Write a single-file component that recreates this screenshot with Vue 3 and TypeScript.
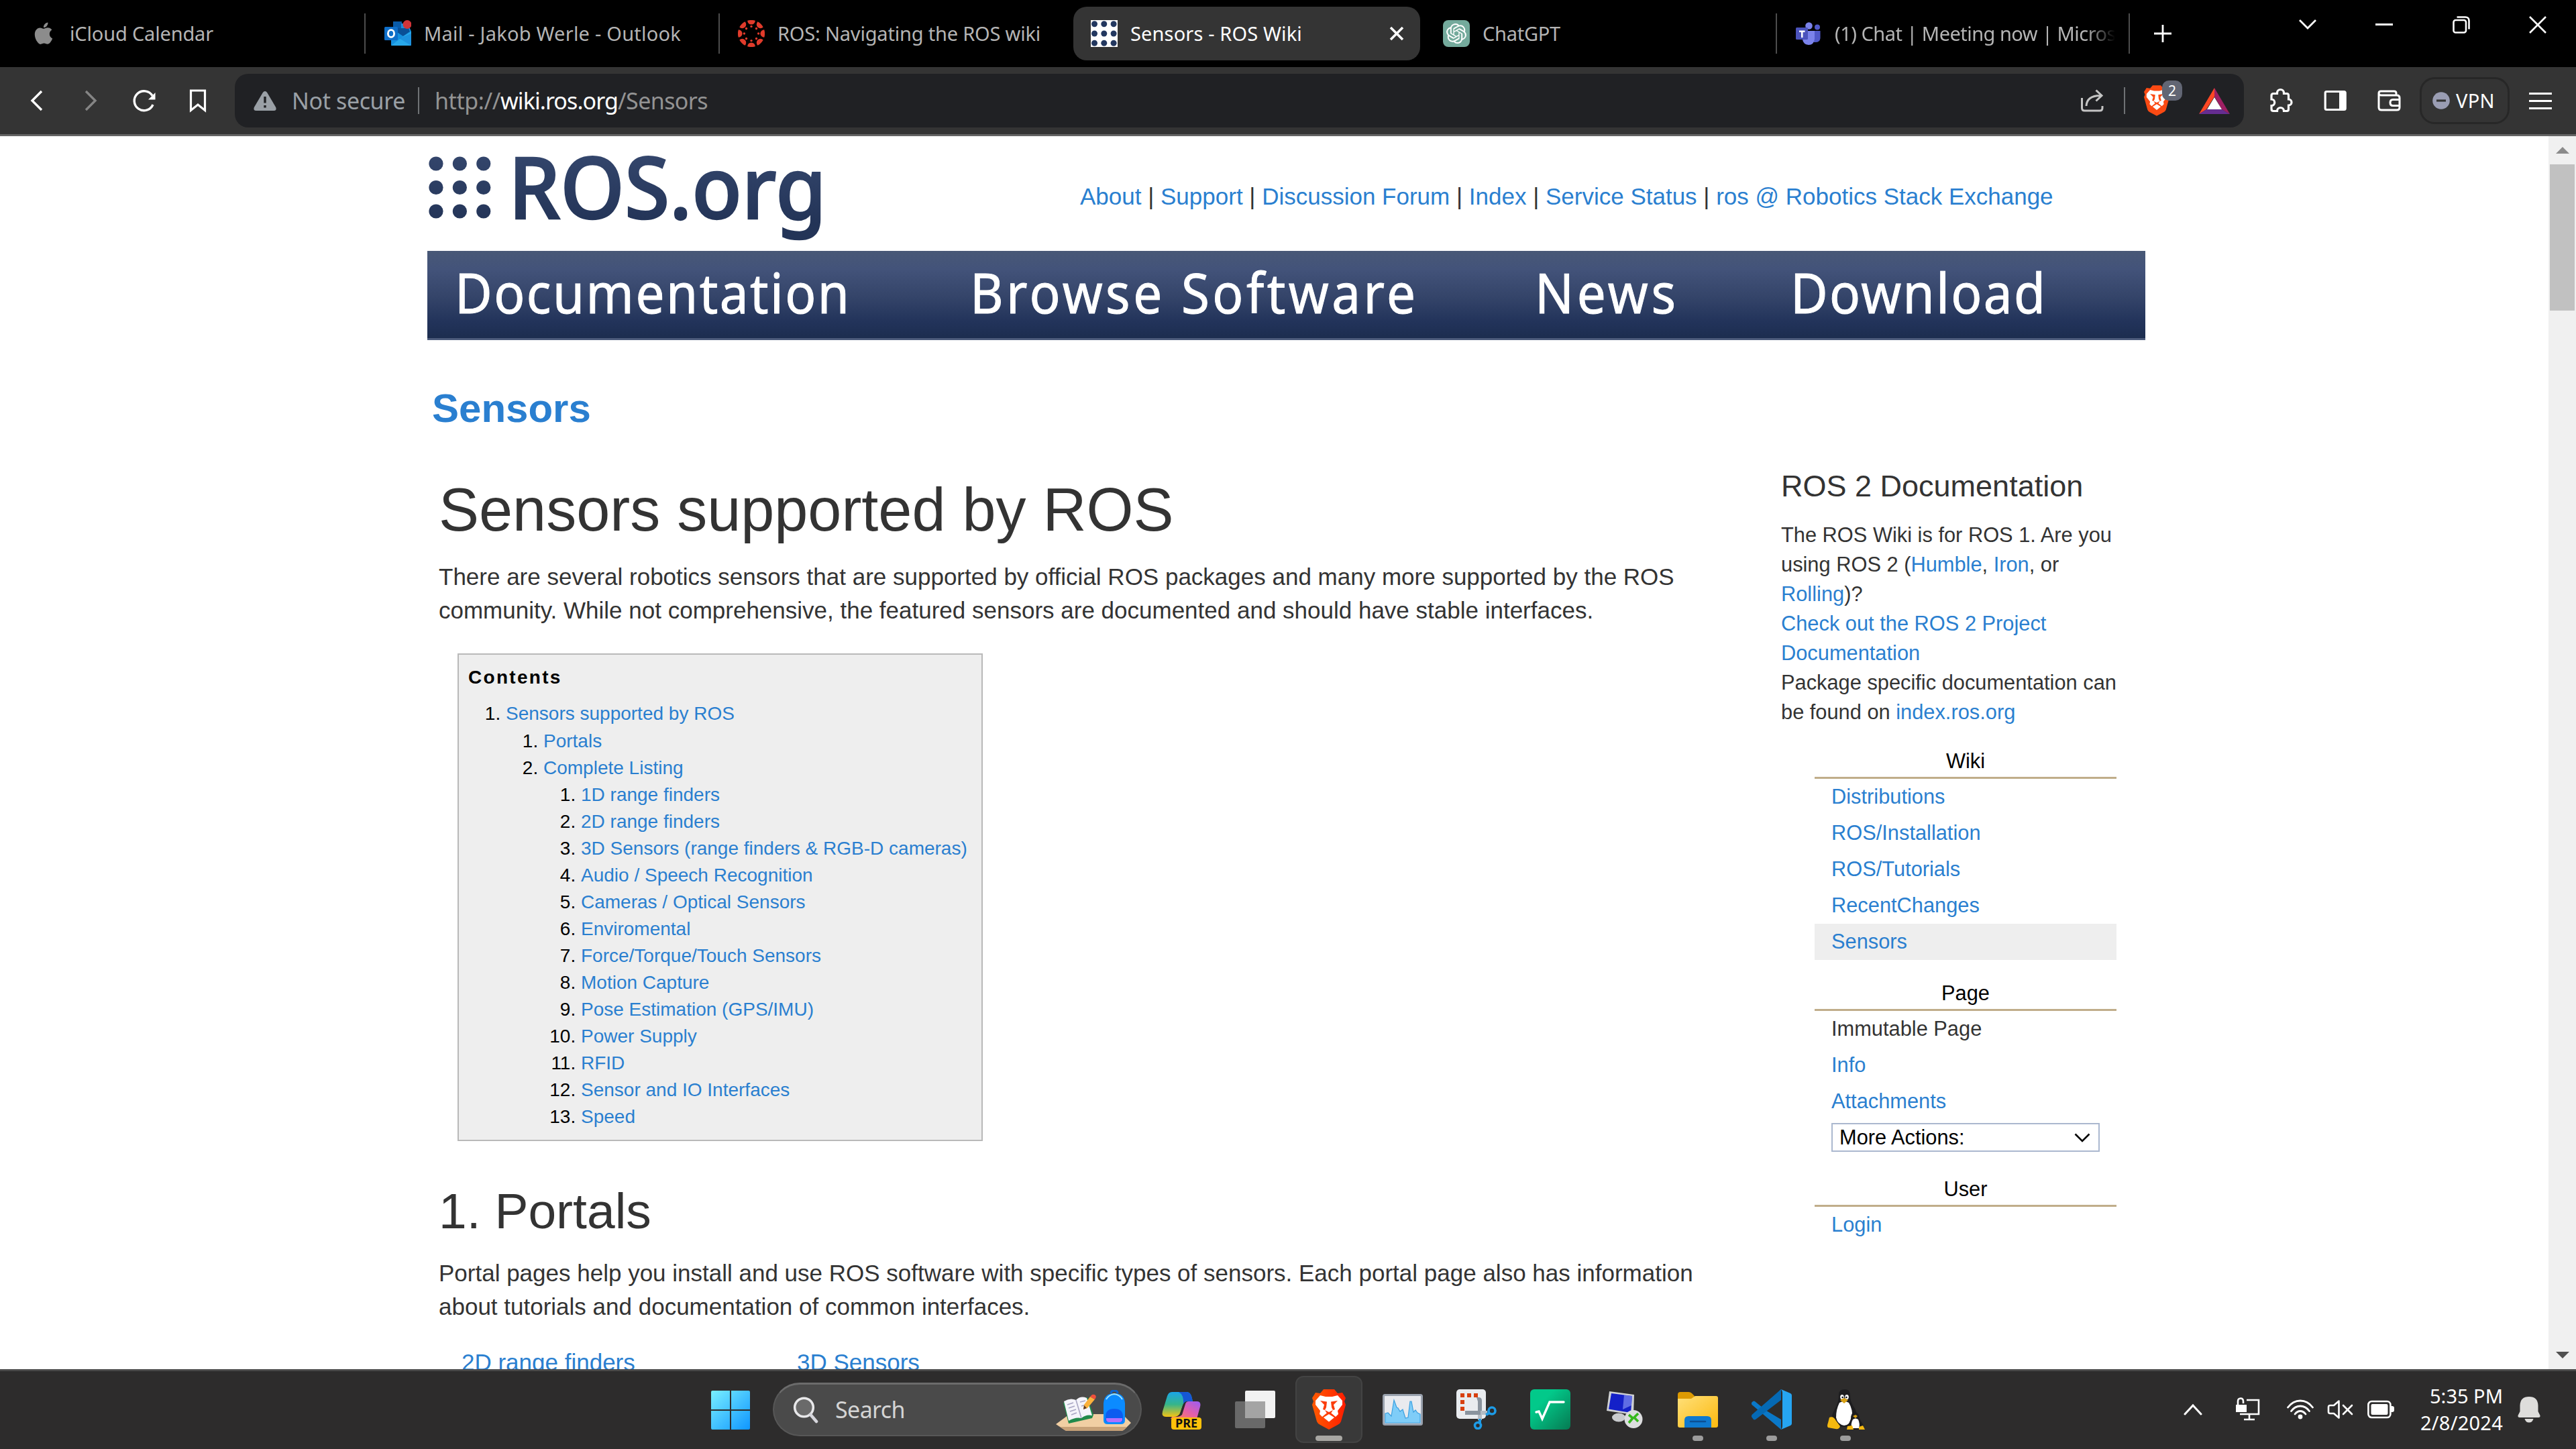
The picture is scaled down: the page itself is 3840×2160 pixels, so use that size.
<script setup lang="ts">
import type { Directive } from 'vue'

/* Tracks a UI label so that its advance width equals the given pixel width. */
const vFit: Directive<HTMLElement, number> = {
  mounted(el, { value }) {
    const count = (el.textContent ?? '').length
    const natural = el.getBoundingClientRect().width
    if (count > 0) el.style.letterSpacing = `${(value - natural) / count}px`
  },
}

interface Tab {
  title: string
  icon: string
  width: number
  pad: number
  text: number
  divider?: boolean
  active?: boolean
}

const tabs: Tab[] = [
  { title: 'iCloud Calendar', icon: 'apple', width: 545, pad: 45, text: 214, divider: true },
  { title: 'Mail - Jakob Werle - Outlook', icon: 'outlook', width: 528, pad: 28, text: 383, divider: true },
  { title: 'ROS: Navigating the ROS wiki', icon: 'canvas', width: 527, pad: 27, text: 392 },
  { title: 'Sensors - ROS Wiki', icon: 'ros', width: 517, pad: 26, text: 256, active: true },
  { title: 'ChatGPT', icon: 'gpt', width: 532, pad: 34, text: 116, divider: true },
  { title: '(1) Chat | Meeting now | Micros', icon: 'teams', width: 526, pad: 27, text: 419, divider: true },
]

const links = ['About', 'Support', 'Discussion Forum', 'Index', 'Service Status', 'ros @ Robotics Stack Exchange']

/* The glyphs are condensed to 92%, so x and w are given in page pixels and divided by the factor. */
const condense = 0.92
const banner = [
  { label: 'Documentation', x: 41, w: 588 },
  { label: 'Browse Software', x: 809, w: 664 },
  { label: 'News', x: 1651, w: 210 },
  { label: 'Download', x: 2032, w: 380 },
]

const listing = [
  '1D range finders',
  '2D range finders',
  '3D Sensors (range finders & RGB-D cameras)',
  'Audio / Speech Recognition',
  'Cameras / Optical Sensors',
  'Enviromental',
  'Force/Torque/Touch Sensors',
  'Motion Capture',
  'Pose Estimation (GPS/IMU)',
  'Power Supply',
  'RFID',
  'Sensor and IO Interfaces',
  'Speed',
]

const wikiLinks = ['Distributions', 'ROS/Installation', 'ROS/Tutorials', 'RecentChanges', 'Sensors']
const grid = [0, 1, 2]
const octants = [0, 45, 90, 135, 180, 225, 270, 315]
</script>

<template>
  <div class="screen">
    <div class="tabstrip">
      <div
        v-for="tab in tabs"
        :key="tab.title"
        class="tab"
        :class="{ active: tab.active, divider: tab.divider }"
        :style="{ width: tab.width + 'px', paddingLeft: tab.pad + 'px' }"
      >
        <svg class="favicon" viewBox="0 0 40 40">
          <path
            v-if="tab.icon === 'apple'"
            transform="translate(3.800 3.500) scale(1.35)"
            fill="#8c8c8c"
            d="M12.152 6.896c-.948 0-2.415-1.078-3.96-1.04-2.04.027-3.91 1.183-4.961 3.014-2.117 3.675-.546 9.103 1.519 12.09 1.013 1.454 2.208 3.09 3.792 3.039 1.52-.065 2.09-.987 3.935-.987 1.831 0 2.35.987 3.96.948 1.637-.026 2.676-1.48 3.676-2.948 1.156-1.688 1.636-3.325 1.662-3.415-.039-.013-3.182-1.221-3.22-4.857-.026-3.04 2.48-4.494 2.597-4.559-1.429-2.09-3.623-2.324-4.39-2.376-2-.156-3.675 1.09-4.61 1.09zM15.53 3.83c.843-1.012 1.4-2.427 1.245-3.83-1.207.052-2.662.805-3.532 1.818-.78.896-1.454 2.338-1.273 3.714 1.338.104 2.715-.688 3.559-1.701"
          />
          <g v-else-if="tab.icon === 'outlook'">
            <rect x="13" y="2" width="13" height="12" fill="#0a5ba8" />
            <rect x="25" y="5" width="12" height="10" fill="#1a8fdc" />
            <path d="M10 12H38L40 17V37a1 1 0 0 1-1 1H11a1 1 0 0 1-1-1Z" fill="#1490df" />
            <path d="M20 12H36L38 17L28 24L19 18Z" fill="#0a4f96" />
            <path d="M10 38L28 24L40 17V36Q40 38 38 38Z" fill="#28a8ea" />
            <path d="M22 27L40 38V20Z" fill="#1784d6" opacity=".6" />
            <rect x="0" y="10" width="20" height="20" rx="1.500" fill="#0f6fc9" />
            <ellipse cx="10" cy="20" rx="4.600" ry="5.400" fill="none" stroke="#fff" stroke-width="2.800" />
            <circle cx="34" cy="6.500" r="6.500" fill="#d13438" />
          </g>
          <g v-else-if="tab.icon === 'canvas'" transform="translate(20 20)" fill="#e13b2b">
            <g v-for="a in octants" :key="a" :transform="`rotate(${a})`">
              <path d="M-5.800 -19.200Q0 -21 5.800 -19.200A5.800 5.800 0 0 1 -5.800 -19.200Z" />
              <circle cx="0" cy="-10.600" r="1.700" />
            </g>
          </g>
          <g v-else-if="tab.icon === 'ros'">
            <rect width="40" height="40" fill="#fff" />
            <template v-for="r in grid" :key="r">
              <circle v-for="c in grid" :key="c" :cx="5.500 + c * 14.300" :cy="5.800 + r * 14.200" r="4.500" fill="#22375f" />
            </template>
          </g>
          <g v-else-if="tab.icon === 'gpt'">
            <rect width="40" height="40" rx="8" fill="#74aa9c" />
            <path
              transform="translate(5 5) scale(1.25)"
              fill="#fff"
              d="M22.2819 9.8211a5.9847 5.9847 0 0 0-.5157-4.9108 6.0462 6.0462 0 0 0-6.5098-2.9A6.0651 6.0651 0 0 0 4.9807 4.1818a5.9847 5.9847 0 0 0-3.9977 2.9 6.0462 6.0462 0 0 0 .7427 7.0966 5.98 5.98 0 0 0 .511 4.9107 6.051 6.051 0 0 0 6.5146 2.9001A5.9847 5.9847 0 0 0 13.2599 24a6.0557 6.0557 0 0 0 5.7718-4.2058 5.9894 5.9894 0 0 0 3.9977-2.9001 6.0557 6.0557 0 0 0-.7475-7.0729zm-9.022 12.6081a4.4755 4.4755 0 0 1-2.8764-1.0408l.1419-.0804 4.7783-2.7582a.7948.7948 0 0 0 .3927-.6813v-6.7369l2.02 1.1686a.071.071 0 0 1 .038.052v5.5826a4.504 4.504 0 0 1-4.4945 4.4944zm-9.6607-4.1254a4.4708 4.4708 0 0 1-.5346-3.0137l.142.0852 4.783 2.7582a.7712.7712 0 0 0 .7806 0l5.8428-3.3685v2.3324a.0804.0804 0 0 1-.0332.0615L9.74 19.9502a4.4992 4.4992 0 0 1-6.1408-1.6464zM2.3408 7.8956a4.485 4.485 0 0 1 2.3655-1.9728V11.6a.7664.7664 0 0 0 .3879.6765l5.8144 3.3543-2.0201 1.1685a.0757.0757 0 0 1-.071 0l-4.8303-2.7865A4.504 4.504 0 0 1 2.3408 7.872zm16.5963 3.8558L13.1038 8.364 15.1192 7.2a.0757.0757 0 0 1 .071 0l4.8303 2.7913a4.4944 4.4944 0 0 1-.6765 8.1042v-5.6772a.79.79 0 0 0-.407-.667zm2.0107-3.0231l-.142-.0852-4.7735-2.7818a.7759.7759 0 0 0-.7854 0L9.409 9.2297V6.8974a.0662.0662 0 0 1 .0284-.0615l4.8303-2.7866a4.4992 4.4992 0 0 1 6.6802 4.66zM8.3065 12.863l-2.02-1.1638a.0804.0804 0 0 1-.038-.0567V6.0742a4.4992 4.4992 0 0 1 7.3757-3.4537l-.142.0805L8.704 5.459a.7948.7948 0 0 0-.3927.6813zm1.0976-2.3654l2.602-1.4998 2.6069 1.4998v2.9994l-2.5974 1.4997-2.6067-1.4997Z"
            />
          </g>
          <g v-else>
            <circle cx="33" cy="10.500" r="4" fill="#5059c9" />
            <circle cx="20.500" cy="8.500" r="5.300" fill="#7b83eb" />
            <path d="M28 16H37.500V27Q37 33 30 33H28Z" fill="#5059c9" />
            <path d="M11 16H29V28Q28 37 20 37Q12 36 11 29Z" fill="#7b83eb" />
            <rect x="1" y="11" width="18" height="18" rx="1.500" fill="#4b53bc" />
            <path d="M6 15.500H14.500V18H11.500V26H9V18H6Z" fill="#fff" />
          </g>
        </svg>
        <span class="tab-clip"><span v-fit="tab.text" class="tab-title">{{ tab.title }}</span></span>
        <svg v-if="tab.active" class="tab-close" viewBox="0 0 22 22">
          <path d="M2 2L20 20M20 2L2 20" stroke="#fff" stroke-width="3.600" />
        </svg>
      </div>
      <svg class="new-tab" viewBox="0 0 28 28"><path d="M14 1V27M1 14H27" stroke="#fff" stroke-width="2.800" /></svg>
      <div class="window-controls">
        <svg viewBox="0 0 28 28"><path d="M2 7L14 19L26 7" fill="none" stroke="#fff" stroke-width="2.800" /></svg>
        <svg viewBox="0 0 28 28"><path d="M1 13.500H27" stroke="#fff" stroke-width="3" /></svg>
        <svg viewBox="0 0 28 28">
          <rect x="2.500" y="7" width="18.500" height="18.500" rx="3" fill="none" stroke="#fff" stroke-width="2.600" />
          <path d="M7.500 2.500H20Q25.500 2.500 25.500 8V20.500" fill="none" stroke="#fff" stroke-width="2.600" />
        </svg>
        <svg viewBox="0 0 28 28"><path d="M2 2L26 26M26 2L2 26" stroke="#fff" stroke-width="2.600" /></svg>
      </div>
    </div>

    <div class="toolbar">
      <svg class="tool back" viewBox="0 0 40 40"><path d="M27 6L13 20L27 34" fill="none" stroke="#fff" stroke-width="3.400" /></svg>
      <svg class="tool forward" viewBox="0 0 40 40"><path d="M13 6L27 20L13 34" fill="none" stroke="#858585" stroke-width="3.400" /></svg>
      <svg class="tool reload" viewBox="0 0 40 40">
        <path d="M33 26A14.500 14.500 0 1 1 32 12.500" fill="none" stroke="#fff" stroke-width="3.400" />
        <path d="M36.500 8V18.500H26Z" fill="#fff" />
      </svg>
      <svg class="tool bookmark" viewBox="0 0 40 40">
        <path d="M9.500 5H30.500V34.500L20 26L9.500 34.500Z" fill="none" stroke="#fff" stroke-width="3.200" />
      </svg>
      <div class="address">
        <svg class="warn" viewBox="0 0 36 32">
          <path d="M18 2Q20 2 21.200 4L34.200 26Q36 31 31 31H5Q0 31 1.800 26L14.800 4Q16 2 18 2Z" fill="#9aa0a6" />
          <path d="M18 10V19.500M18 23V26.500" stroke="#202124" stroke-width="3.400" />
        </svg>
        <span v-fit="169" class="address-note">Not secure</span>
        <i class="bar" />
        <span class="url"><span v-fit="98" class="dim">http://</span><span v-fit="175">wiki.ros.org</span><span v-fit="134" class="dim">/Sensors</span></span>
        <svg class="share" viewBox="0 0 36 36">
          <path d="M2.500 14V29Q2.500 33 6.500 33H29Q33 33 33 29V26" fill="none" stroke="#c4c4c4" stroke-width="3" />
          <path d="M9 26Q10 10 31 10.500M23.500 2.500L32 10.500L23.500 18.500" fill="none" stroke="#c4c4c4" stroke-width="3" />
        </svg>
        <i class="bar bar-right" />
        <div class="shield">
          <svg viewBox="0 0 50 60">
            <path d="M12 6L17 0H33L38 6L45 5L50 13L48 18L50 23L43 48Q42 51 38 53L25 60L12 53Q8 51 7 48L0 23L2 18L0 13L5 5Z" fill="#fb4a13" />
            <path d="M5 17L12 9L20 11H30L38 9L45 17L45 23L38 32L39 37L35 41L29 36L25 34L21 36L15 41L11 37L12 32L5 23Z" fill="#fff" />
            <path d="M25 37L33 42L25 48.500L17 42Z" fill="#fff" />
            <path d="M12 17L22 18.500L21 27L19 31L16 30L18 23ZM38 17L28 18.500L29 27L31 31L34 30L32 23ZM19 31L25 34L31 31L28 36H22Z" fill="#fb4a13" />
          </svg>
          <b>2</b>
        </div>
        <svg class="bat" viewBox="0 0 46 39">
          <path d="M23 0L0 39L11 32L23 13Z" fill="#ff4724" />
          <path d="M23 0L46 39L34 32L23 13Z" fill="#9e1f63" />
          <path d="M0 39H46L34 32H11Z" fill="#662d91" />
          <path d="M23 14L34 32H12Z" fill="#fff" />
        </svg>
      </div>
      <svg class="tool ext" viewBox="0 0 40 40">
        <path
          d="M6 12.500Q6 9.500 9 9.500H14.500V8.500A5 5 0 0 1 24.500 8.500V9.500H29Q31.500 9.500 31.500 12.500V18A4.500 4.500 0 0 1 31.500 27V32.500Q31.500 35.500 29 35.500H24.500A5 5 0 0 0 14.500 35.500H9Q6 35.500 6 32.500V27.500A4.500 4.500 0 0 0 6 18Z"
          fill="none"
          stroke="#fff"
          stroke-width="3.200"
        />
      </svg>
      <svg class="tool panel" viewBox="0 0 40 40">
        <rect x="5.200" y="6.500" width="30" height="27" rx="2" fill="none" stroke="#fff" stroke-width="3.200" />
        <rect x="26" y="6" width="10" height="28" fill="#fff" />
      </svg>
      <svg class="tool wallet" viewBox="0 0 40 40">
        <path d="M5 9Q5 6 8 6H28Q31 6 31 9V12M5 9V30Q5 34 9 34H32Q36 34 36 30V16Q36 12 32 12H9Q5 12 5 9" fill="none" stroke="#fff" stroke-width="3" />
        <path d="M36 18.500H26Q22 18.500 22 23Q22 27.500 26 27.500H36" fill="none" stroke="#fff" stroke-width="3" />
      </svg>
      <div class="vpn">
        <svg viewBox="0 0 26 26"><circle cx="13" cy="13" r="12.800" fill="#9a9db3" /><path d="M6 13H20" stroke="#343434" stroke-width="3.200" /></svg>
        <span v-fit="58">VPN</span>
      </div>
      <svg class="tool menu" viewBox="0 0 40 40"><path d="M3 9.500H37M3 20.500H37M3 31.500H37" stroke="#fff" stroke-width="3.200" /></svg>
    </div>

    <div class="viewport">
      <div class="page">
        <div class="header">
          <svg class="logo" viewBox="0 0 600 170">
            <defs>
              <linearGradient id="navy" x1="0" y1="30" x2="0" y2="130" gradientUnits="userSpaceOnUse">
                <stop offset="0" stop-color="#33456b" />
                <stop offset="1" stop-color="#233457" />
              </linearGradient>
            </defs>
            <template v-for="r in grid" :key="r">
              <circle v-for="c in grid" :key="c" :cx="13 + c * 35.400" :cy="41 + r * 35.500" r="10.600" fill="url(#navy)" />
            </template>
            <text x="121" y="122.500" textLength="474" lengthAdjust="spacingAndGlyphs" class="logo-text" fill="url(#navy)" stroke="url(#navy)">ROS.org</text>
          </svg>
          <nav class="links">
            <template v-for="(link, i) in links" :key="link">
              <template v-if="i > 0">{{ ' | ' }}</template><a>{{ link }}</a>
            </template>
          </nav>
        </div>
        <svg class="banner" viewBox="0 0 2561 133">
          <g :transform="`scale(${condense} 1)`">
            <text v-for="b in banner" :key="b.label" :x="b.x / condense" y="93" :textLength="b.w / condense" class="banner-text">{{ b.label }}</text>
          </g>
        </svg>
        <h1 class="title"><a>Sensors</a></h1>
        <div class="columns">
          <main>
            <h1>Sensors supported by ROS</h1>
            <p>There are several robotics sensors that are supported by official ROS packages and many more supported by the ROS<br />community. While not comprehensive, the featured sensors are documented and should have stable interfaces.</p>
            <div class="toc">
              <p class="toc-head">Contents</p>
              <ol>
                <li>
                  <a>Sensors supported by ROS</a>
                  <ol class="second">
                    <li><a>Portals</a></li>
                    <li>
                      <a>Complete Listing</a>
                      <ol>
                        <li v-for="item in listing" :key="item"><a>{{ item }}</a></li>
                      </ol>
                    </li>
                  </ol>
                </li>
              </ol>
            </div>
            <h2>1. Portals</h2>
            <p>Portal pages help you install and use ROS software with specific types of sensors. Each portal page also has information<br />about tutorials and documentation of common interfaces.</p>
            <div class="portal-links"><a>2D range finders</a><a>3D Sensors</a></div>
          </main>
          <aside>
            <h3>ROS 2 Documentation</h3>
            <p>The ROS Wiki is for ROS 1. Are you<br />using ROS 2 (<a>Humble</a>, <a>Iron</a>, or<br /><a>Rolling</a>)?<br /><a>Check out the ROS 2 Project<br />Documentation</a><br />Package specific documentation can<br />be found on <a>index.ros.org</a></p>
            <section>
              <h4>Wiki</h4>
              <div v-for="w in wikiLinks" :key="w" class="row" :class="{ current: w === 'Sensors' }"><a>{{ w }}</a></div>
            </section>
            <section>
              <h4>Page</h4>
              <div class="row">Immutable Page</div>
              <div class="row"><a>Info</a></div>
              <div class="row"><a>Attachments</a></div>
              <div class="select">
                <span>More Actions:</span>
                <svg viewBox="0 0 24 14"><path d="M1.500 1.500L12 12L22.500 1.500" fill="none" stroke="#000" stroke-width="2.600" /></svg>
              </div>
            </section>
            <section>
              <h4>User</h4>
              <div class="row"><a>Login</a></div>
            </section>
          </aside>
        </div>
      </div>
      <div class="scrollbar">
        <svg viewBox="0 0 20 10"><path d="M0 10L10 0L20 10Z" fill="#8b8b8b" /></svg>
        <div class="thumb" />
        <svg class="down" viewBox="0 0 20 10"><path d="M0 0L10 10L20 0Z" fill="#505050" /></svg>
      </div>
    </div>

    <div class="taskbar">
      <svg class="start" viewBox="0 0 58 58">
        <defs>
          <linearGradient id="win" x1="0" y1="0" x2="1" y2="1" gradientUnits="objectBoundingBox">
            <stop offset="0" stop-color="#79efff" />
            <stop offset="1" stop-color="#0f96ff" />
          </linearGradient>
        </defs>
        <path d="M2 0H28V28H0V2Q0 0 2 0ZM30 0H56Q58 0 58 2V28H30ZM0 30H28V58H2Q0 58 0 56ZM30 30H58V56Q58 58 56 58H30Z" fill="url(#win)" />
      </svg>
      <div class="search">
        <svg class="glass" viewBox="0 0 38 40">
          <circle cx="16.500" cy="16" r="13.800" fill="#6a6a6a" stroke="#e8e8ea" stroke-width="3.600" />
          <path d="M26 26.500L35 37" stroke="#d6d6dc" stroke-width="4.600" stroke-linecap="round" />
        </svg>
        <span v-fit="104">Search</span>
        <svg class="art" viewBox="0 0 114 62">
          <path d="M26 36H96Q101 36 103 39L113 49L103 59Q101 61 98 61H18Q15 61 13 59L1 51L16 40Q20 36 26 36Z" fill="#f1cfa3" />
          <path d="M1 51L8 55H107L103 59Q101 61 98 61H18Q15 61 13 59Z" fill="#c7a177" />
          <path d="M12 19L48 11L57 37L55 42L20 50Z" fill="#218a4b" />
          <path d="M13 17Q22 11 31 15Q38 8 47 12L55 38Q46 36 39 42Q30 40 20 46Z" fill="#f5f4fb" />
          <path d="M31 15L39 42M18 22L27 19M20 27L29 24M22 32L31 29M24 37L32 34M37 18L45 16M39 24L46 22" stroke="#a9a6c4" stroke-width="1.600" />
          <path d="M43 22L52 10L59 14L48 27L42 29Z" fill="#fbb13c" />
          <path d="M42 29L43 23L47 27Z" fill="#5a3b2a" />
          <path d="M52 10L55 7Q58 6 60 8Q62 10 59 14Z" fill="#f0503c" />
          <path d="M83 5Q83 1 88 1Q93 1 93 5" fill="none" stroke="#0a62d0" stroke-width="3" />
          <path d="M72 20Q73 5 88 5Q103 5 104 20V45Q104 51 98 51H78Q72 51 72 45Z" fill="#0b8bff" />
          <path d="M76 14Q80 7 88 6Q96 7 100 14" fill="none" stroke="#9fe2ff" stroke-width="2" />
          <path d="M75 40Q75 28 88 28Q101 28 101 40V44Q101 48 97 48H79Q75 48 75 44Z" fill="#0d5cf0" />
          <path d="M76 42H100V45Q99 48 96 48H80Q77 48 76 45Z" fill="#b070ff" />
        </svg>
      </div>
      <div class="apps">
        <div class="app">
          <svg viewBox="0 0 60 60">
            <defs>
              <linearGradient id="copA" x1="0" y1="0" x2="0" y2="1">
                <stop offset="0" stop-color="#1aa5e8" /><stop offset=".5" stop-color="#35b58a" /><stop offset="1" stop-color="#f4c414" />
              </linearGradient>
              <linearGradient id="copB" x1="1" y1="0" x2="0" y2="1">
                <stop offset="0" stop-color="#9a5cf5" /><stop offset=".5" stop-color="#e45fa8" /><stop offset="1" stop-color="#ff8a4a" />
              </linearGradient>
            </defs>
            <path d="M16 4H38Q43 4 45 10L47 18H39Q34 18 32 24L28 36Q25 41 19 41H7Q0 41 2 33L9 10Q11 4 16 4Z" fill="url(#copA)" />
            <path d="M26 4H38Q43 4 45 10L47 18H39Q35 18 33 22Q34 8 26 4Z" fill="#1557d6" />
            <path d="M33 22L28 36Q27 39 24 41H30L36 24Q37 20 41 18H39Q35 18 33 22Z" fill="#2d2c2c" />
            <path d="M41 18H53Q60 18 58 26L53 44H14L16 41H22Q28 41 31 38L36 22Q37 18 41 18Z" fill="url(#copB)" />
            <rect x="15" y="42" width="45" height="18" rx="4" fill="#ffc20a" />
            <text x="37.500" y="57" text-anchor="middle" class="pre">PRE</text>
          </svg>
        </div>
        <div class="app">
          <svg viewBox="0 0 60 60">
            <rect x="0" y="18" width="45" height="40" rx="2" fill="#696969" />
            <rect x="15" y="2" width="45" height="41" rx="2" fill="#f2f2f2" />
            <path d="M15 18H45V43H17Q15 43 15 41Z" fill="#a4a4a4" />
          </svg>
        </div>
        <div class="app focus">
          <svg viewBox="-5 0 60 60">
            <defs>
              <linearGradient id="brv" x1="0" y1="0" x2="1" y2="0"><stop offset="0" stop-color="#ff5a00" /><stop offset="1" stop-color="#ff1d00" /></linearGradient>
            </defs>
            <path d="M12 6L17 0H33L38 6L45 5L50 13L48 18L50 23L43 48Q42 51 38 53L25 60L12 53Q8 51 7 48L0 23L2 18L0 13L5 5Z" fill="url(#brv)" />
            <path d="M5 17L12 9L20 11H30L38 9L45 17L45 23L38 32L39 37L35 41L29 36L25 34L21 36L15 41L11 37L12 32L5 23Z" fill="#fff" />
            <path d="M25 37L33 42L25 48.500L17 42Z" fill="#fff" />
            <path d="M12 17L22 18.500L21 27L19 31L16 30L18 23ZM38 17L28 18.500L29 27L31 31L34 30L32 23ZM19 31L25 34L31 31L28 36H22Z" fill="#fb3d0c" />
          </svg>
          <i class="mark wide" />
        </div>
        <div class="app">
          <svg viewBox="0 0 60 60">
            <rect x="1.500" y="8.500" width="57" height="44" rx="2" fill="#e9eaee" stroke="#9aa2ae" stroke-width="3" />
            <path d="M4 36L8 35L13 40L17 16L21 27L23 28L26 33L30 30L34 43L38 42L41 18L43 18L46 34L49 31L52 35L56 37V50H4Z" fill="#7fcdf8" stroke="#3aa0e0" stroke-width="1.200" />
          </svg>
        </div>
        <div class="app">
          <svg viewBox="0 0 60 60">
            <rect x="0" y="0" width="44" height="44" rx="5" fill="#e9ecef" />
            <path d="M6 6H12V12H6ZM16 6H22V12H16ZM26 6H32V12H26ZM6 16H12V22H6ZM6 26H12V32H6Z" fill="#d8400f" />
            <path d="M30 12H33Q38 12 38 17V44H32V38H13V32H32V18Z" fill="#8a949e" />
            <path d="M36 32H46V38H36ZM32 38H38V46H32Z" fill="#b4bcc4" />
            <circle cx="53" cy="32" r="5" fill="none" stroke="#1d9be6" stroke-width="3.600" />
            <circle cx="32" cy="54" r="4.500" fill="none" stroke="#1d9be6" stroke-width="3.600" />
            <path d="M44 38L50 35M35 44V50" stroke="#1d9be6" stroke-width="4" />
          </svg>
        </div>
        <div class="app">
          <svg viewBox="0 0 60 60">
            <defs><linearGradient id="grn" x1="0" y1="0" x2="1" y2="1"><stop offset=".3" stop-color="#02c98a" /><stop offset="1" stop-color="#067a52" /></linearGradient></defs>
            <rect width="60" height="60" rx="6" fill="url(#grn)" />
            <path d="M9 34L13 33L18 44L29 19H50" fill="none" stroke="#fff" stroke-width="3.400" stroke-linecap="round" />
          </svg>
        </div>
        <div class="app">
          <svg viewBox="0 0 60 60">
            <ellipse cx="22" cy="42" rx="10" ry="6.500" fill="#c9cbce" />
            <path d="M8 3L45 8L44 38L4 32Z" fill="#cfd1d4" />
            <path d="M11 6L42 10L40 35L7 29.500Z" fill="#1420c8" />
            <path d="M30 8.500L42 10L41 24L28 30Z" fill="#7f8df0" opacity=".7" />
            <circle cx="44" cy="44.500" r="13.500" fill="#dcdddf" />
            <path d="M37 38L43 43L37 50M51 36L45 42L51 48" fill="none" stroke="#36b81c" stroke-width="3.600" />
          </svg>
        </div>
        <div class="app">
          <svg viewBox="0 0 60 60">
            <defs>
              <linearGradient id="fld" x1="0" y1="0" x2="1" y2="1"><stop offset="0" stop-color="#ffe07a" /><stop offset="1" stop-color="#fcb90e" /></linearGradient>
            </defs>
            <path d="M0 8Q0 4 4 4H16Q19 4 21 6L25 10V20H0Z" fill="#dc9a02" />
            <path d="M0 14H20L26 10H57Q60 10 60 13V54Q60 57 57 57H3Q0 57 0 54Z" fill="url(#fld)" />
            <path d="M10 57V46Q10 40 16 40H44Q50 40 50 46V57Z" fill="#0f79cf" />
            <path d="M19 48H41" stroke="#0b4f94" stroke-width="2.600" stroke-linecap="round" />
          </svg>
          <i class="mark" />
        </div>
        <div class="app">
          <svg viewBox="0 0 60 60">
            <path d="M44 0L16 27L5 18Q3.500 17 2 18L0 20Q-.500 21.500 .500 23L44 60V45L19 30L44 15Z" fill="#0a78c8" />
            <path d="M0 41Q-.500 39 1 37.500L44 0V16L6 45Q4 46 2.500 44.500Z" fill="#0569b4" />
            <path d="M44 0L58 6Q60 7 60 9V51Q60 53 58 54L44 60Q46 58 46 55V5Q46 2 44 0Z" fill="#26a5f2" />
          </svg>
          <i class="mark" />
        </div>
        <div class="app">
          <svg viewBox="0 0 60 60">
            <path d="M20 8Q20 0 29 0Q37 0 37 9Q37 17 41 24Q48 33 47 44L43 56H14L9 44Q10 36 16 26Q20 18 20 8Z" fill="#1d1d1f" />
            <path d="M21 20Q28 16 35 20Q41 30 40 42Q36 54 28 54Q18 52 16 42Q16 30 21 20Z" fill="#fff" />
            <ellipse cx="25" cy="11.500" rx="2.800" ry="3.500" fill="#fff" /><ellipse cx="32" cy="11.500" rx="2.800" ry="3.500" fill="#fff" />
            <circle cx="25.600" cy="12" r="1.200" fill="#000" /><circle cx="31.400" cy="12" r="1.200" fill="#000" />
            <path d="M22 16L28 13L34 16L28 21Z" fill="#d9a114" />
            <path d="M6 42Q12 39 16 47L22 55Q21 60 15 59L4 57Q2 55 4 50Z" fill="#f5b90f" />
            <path d="M38 44Q38 34 44.500 34Q50 34 51 44L57 54L52 60H36L34 54Z" fill="#1d1d1f" />
            <path d="M41 45Q45 42 49 45Q52 52 50 58H40Q37 52 41 45Z" fill="#fff" />
            <path d="M41 40L45 38L48 40L45 43Z" fill="#d9a114" />
            <path d="M33 55L40 54L42 60H32ZM50 56L56 54L59 60H50Z" fill="#f5b90f" />
          </svg>
          <i class="mark" />
        </div>
      </div>
      <div class="tray">
        <svg class="up" viewBox="0 0 28 18"><path d="M2 16L14 3L26 16" fill="none" stroke="#fff" stroke-width="3" stroke-linecap="round" /></svg>
        <svg class="net" viewBox="0 0 40 38">
          <g fill="none" stroke="#fff" stroke-width="2.600">
            <path d="M19 6H37V27H9M23 27V34M15 35H31" />
            <path d="M6 14V8Q6 3.500 10 3.500Q14 3.500 14 8V11" />
          </g>
          <rect x="3" y="13" width="16" height="11" fill="#fff" />
        </svg>
        <svg class="wifi" viewBox="0 0 40 30">
          <g fill="none" stroke="#fff" stroke-width="2.800" stroke-linecap="round">
            <path d="M1.500 12Q9 2 20 2Q31 2 38.500 12" /><path d="M6.500 17.500Q12 10 20 10Q28 10 33.500 17.500" /><path d="M12 22Q15.500 17.500 20 17.500Q24.500 17.500 28 22" />
          </g>
          <circle cx="20" cy="26" r="3.400" fill="#fff" />
        </svg>
        <svg class="mute" viewBox="0 0 40 30">
          <path d="M17.500 2.500L10 9H4.500Q2 9 2 11.500V18.500Q2 21 4.500 21H10L17.500 27.500Z" fill="none" stroke="#fff" stroke-width="2.600" stroke-linejoin="round" />
          <path d="M24 9L37 22M37 9L24 22" stroke="#fff" stroke-width="2.600" stroke-linecap="round" />
        </svg>
        <svg class="battery" viewBox="0 0 40 28">
          <rect x="1.400" y="2" width="33" height="24" rx="5" fill="none" stroke="#fff" stroke-width="2.600" />
          <rect x="5.500" y="6" width="25" height="16" rx="2" fill="#fff" />
          <path d="M35 9H37Q40 9 40 12V15Q40 18 37 18H35Z" fill="#fff" />
        </svg>
        <div class="clock"><span v-fit="109">5:35 PM</span><span v-fit="123">2/8/2024</span></div>
        <svg class="bell" viewBox="0 0 34 40">
          <path d="M17 1Q30 1 30.500 14V23L33.500 29Q34 32 31 32H3Q0 32 .500 29L3.500 23V14Q4 1 17 1Z" fill="#dedddb" />
          <path d="M10.500 34H23.500Q22 39.500 17 39.500Q12 39.500 10.500 34Z" fill="#dedddb" />
        </svg>
      </div>
    </div>
  </div>
</template>

<style>
body {
  background: #fff;
  overflow: hidden;
}
</style>

<style scoped>
.screen {
  width: 3840px;
  height: 2160px;
  overflow: hidden;
  display: flex;
  flex-direction: column;
  font-family: "Liberation Sans", Arial, sans-serif;
}
svg {
  display: block;
  flex: none;
}
h1, h2, h3, h4, p, ol {
  margin: 0;
  font-weight: 400;
}
a {
  color: #2a7fd0;
}
.tabstrip, .toolbar, .taskbar {
  flex: none;
  display: flex;
  font-family: "Noto Sans", "Open Sans", sans-serif;
  white-space: nowrap;
}

/* Tab strip */
.tabstrip {
  height: 100px;
  background: #000;
  align-items: center;
}
.tab {
  position: relative;
  box-sizing: border-box;
  height: 80px;
  flex: none;
  display: flex;
  align-items: center;
  border-radius: 20px;
  color: #b4b4b4;
  font-size: 29px;
}
.tab.active {
  background: #343434;
  color: #fff;
}
.tab.divider::after {
  content: "";
  position: absolute;
  right: 0;
  top: 10px;
  width: 2px;
  height: 60px;
  background: #4c4c4c;
}
.favicon {
  width: 40px;
  height: 40px;
}
.tab-clip {
  margin: 0 0 2px 19px;
  width: 425px;
}
.tab:nth-child(6) .tab-clip {
  -webkit-mask-image: linear-gradient(90deg, #000 375px, transparent 418px);
  mask-image: linear-gradient(90deg, #000 375px, transparent 418px);
}
.tab.active .tab-clip {
  width: 386px;
}
.tab-title {
  display: inline-block;
}
.tab-close {
  width: 22px;
  height: 22px;
}
.new-tab {
  width: 28px;
  height: 28px;
  margin-left: 35px;
}
.window-controls {
  display: flex;
  gap: 86.500px;
  margin: 0 43px 27px auto;
}
.window-controls svg {
  width: 28px;
  height: 28px;
}

/* Toolbar */
.toolbar {
  height: 100px;
  background: #343434;
  border-bottom: 3px solid #646464;
  align-items: center;
}
.tool {
  width: 40px;
  height: 40px;
}
.back { margin-left: 35px; }
.forward { margin-left: 40px; }
.reload { margin-left: 40px; }
.bookmark { margin-left: 40px; }
.address {
  box-sizing: border-box;
  width: 2995px;
  height: 80px;
  margin-left: 35px;
  padding-left: 27px;
  border-radius: 20px;
  background: #202124;
  display: flex;
  align-items: center;
  font-size: 34px;
  color: #fff;
}
.warn {
  width: 36px;
  height: 32px;
}
.address-note {
  margin-left: 22px;
  color: #9aa0a6;
}
.bar {
  width: 2px;
  height: 40px;
  margin-left: 19px;
  background: #6f7275;
}
.url {
  margin-left: 23px;
  display: flex;
}
.dim { color: #939393; }
.share {
  width: 36px;
  height: 36px;
  margin-left: auto;
}
.bar-right {
  margin-left: 29px;
}
.shield {
  position: relative;
  width: 38px;
  height: 46px;
  margin-left: 28px;
}
.shield svg {
  width: 38px;
  height: 46px;
}
.shield b {
  position: absolute;
  left: 27px;
  top: -7px;
  width: 30px;
  height: 30px;
  border-radius: 10px;
  background: #626674;
  font: 400 21px/30px "Noto Sans", sans-serif;
  text-align: center;
}
.bat {
  width: 46px;
  height: 39px;
  margin: 0 21px 0 44px;
}
.ext { margin-left: 35px; }
.panel { margin-left: 41px; }
.wallet { margin-left: 40px; }
.vpn {
  box-sizing: border-box;
  width: 134px;
  height: 70px;
  margin-left: 26px;
  border: 3px solid #272727;
  border-radius: 22px;
  display: flex;
  align-items: center;
  color: #fff;
  font-size: 29px;
}
.vpn span {
  margin-bottom: 2px;
}
.vpn svg {
  width: 26px;
  height: 26px;
  margin: 0 9px 0 16px;
}
.menu { margin-left: 26px; }

/* Wiki page */
.viewport {
  height: 1838px;
  flex: none;
  display: flex;
  overflow: hidden;
  background: #fff;
  color: #333;
}
.page {
  width: 2561px;
  height: 1838px;
  margin-left: 637px;
  flex: none;
}
.header {
  height: 171px;
  display: flex;
}
.logo {
  width: 600px;
  height: 170px;
  overflow: visible;
}
.logo-text {
  font: 500 127px "Noto Sans", sans-serif;
  stroke-width: 2.500px;
}
.links {
  margin: 65px 0 0 373px;
  font-size: 35px;
  line-height: 50px;
  white-space: nowrap;
}
.banner {
  width: 2561px;
  height: 133px;
  background: linear-gradient(#485876 0, #43537a 20%, #35456a 50%, #22335a 80%, #1c2d4f 98%, #4d5c7b 98%);
}
.banner-text {
  font: 400 83px "Noto Sans", sans-serif;
  fill: #fff;
  stroke: #fff;
  stroke-width: 1px;
}
.title {
  margin: 69px 0 0 7px;
  font-size: 60px;
  line-height: 66px;
  font-weight: 700;
}
.columns {
  display: flex;
}
main {
  width: 2001px;
  flex: none;
  box-sizing: border-box;
  padding: 69px 0 0 17px;
  font-size: 35px;
  line-height: 50px;
  white-space: nowrap;
}
main h1 {
  font-size: 90px;
  line-height: 99px;
  margin-bottom: 25px;
}
.toc {
  box-sizing: border-box;
  width: 783px;
  height: 727px;
  margin: 39px 0 0 28px;
  padding: 14px 11px 0 14px;
  border: 2px solid #b9b9b9;
  background: #eee;
  color: #000;
  font-size: 28px;
  line-height: 40px;
}
.toc-head {
  font-weight: 700;
  letter-spacing: 2.300px;
  margin-bottom: 14px;
}
ol {
  padding-left: 56px;
}
.second {
  padding-top: 1px;
}
h2 {
  margin-top: 63px;
  margin-bottom: 26px;
  font-size: 75px;
  line-height: 83px;
}
.portal-links {
  display: flex;
  margin: 33px 0 0 34px;
}
.portal-links a:first-child {
  width: 500px;
}
aside {
  width: 520px;
  padding: 58px 0 0 17px;
  font-size: 30.800px;
  line-height: 44px;
  white-space: nowrap;
}
aside h3 {
  font-size: 45px;
  line-height: 50px;
  margin-bottom: 26px;
}
section {
  width: 450px;
  margin: 27px 0 0 50px;
}
p + section {
  margin-top: 28px;
}
h4 {
  height: 46px;
  line-height: 45px;
  border-bottom: 3px solid #c0ad8a;
  text-align: center;
  color: #000;
}
.row {
  height: 54px;
  line-height: 53px;
  padding-left: 25px;
}
.current {
  background: #eee;
}
.select {
  box-sizing: border-box;
  width: 400px;
  height: 43px;
  margin: 5px 0 33px 25px;
  padding: 0 12px 0 10px;
  border: 2px solid #abb8cf;
  display: flex;
  align-items: center;
  justify-content: space-between;
  line-height: 39px;
  color: #000;
}
.select svg {
  width: 24px;
  height: 14px;
}
.scrollbar {
  width: 41px;
  margin-left: auto;
  background: #f0f0f0;
  display: flex;
  flex-direction: column;
  align-items: center;
}
.scrollbar svg {
  width: 20px;
  height: 10px;
  margin-top: 16px;
}
.thumb {
  width: 37px;
  height: 218px;
  margin-top: 16px;
  background: #c1c1c1;
}
.scrollbar .down {
  margin: auto 0 16px;
}

/* Taskbar */
.taskbar {
  box-sizing: border-box;
  height: 119px;
  border-top: 3px solid #4a4a4a;
  background: #2d2c2c;
  align-items: center;
}
.start {
  width: 58px;
  height: 58px;
  margin-left: 1060px;
}
.search {
  box-sizing: border-box;
  width: 550px;
  height: 80px;
  margin: 0 0 2px 34px;
  padding: 0 13px 0 28px;
  border: 2px solid #575757;
  border-top: 3px solid #6b6b6b;
  border-radius: 40px;
  background: #4a4a4a;
  display: flex;
  align-items: center;
  font-size: 34px;
  color: #d4d4d4;
}
.search span {
  margin-bottom: 1px;
}
.glass {
  width: 38px;
  height: 40px;
  margin-right: 25px;
}
.art {
  width: 114px;
  height: 62px;
  margin: 3px 0 0 auto;
}
.apps {
  display: flex;
  margin: 0 0 2px 4px;
}
.app {
  position: relative;
  width: 100px;
  height: 100px;
  margin: 0 5px;
  display: flex;
  align-items: center;
  justify-content: center;
}
.app svg {
  width: 60px;
  height: 60px;
}
.focus::before {
  content: "";
  position: absolute;
  inset: 0;
  box-sizing: border-box;
  border: 2px solid #434343;
  border-radius: 12px;
  background: #393939;
}
.focus svg {
  position: relative;
}
.mark {
  position: absolute;
  left: 42px;
  top: 89px;
  width: 16px;
  height: 8px;
  border-radius: 4px;
  background: #9c9c9c;
}
.mark.wide {
  left: 30px;
  width: 40px;
  background: #a8a7a3;
}
.pre {
  font: 700 18px "Noto Sans", sans-serif;
  fill: #111;
}
.tray {
  display: flex;
  align-items: center;
  margin: 0 0 2px auto;
  color: #fff;
}
.up { width: 28px; height: 18px; margin-right: 47px; }
.net { width: 40px; height: 38px; margin-right: 39px; margin-bottom: 3px; }
.wifi { width: 40px; height: 30px; margin-right: 20px; }
.mute { width: 40px; height: 30px; margin-right: 20px; }
.battery { width: 40px; height: 28px; margin-right: 38px; }
.clock {
  width: 124px;
  display: flex;
  flex-direction: column;
  align-items: flex-end;
  font-size: 29px;
  line-height: 40px;
}
.bell { width: 34px; height: 40px; margin: 0 53px 0 22px; }
</style>
